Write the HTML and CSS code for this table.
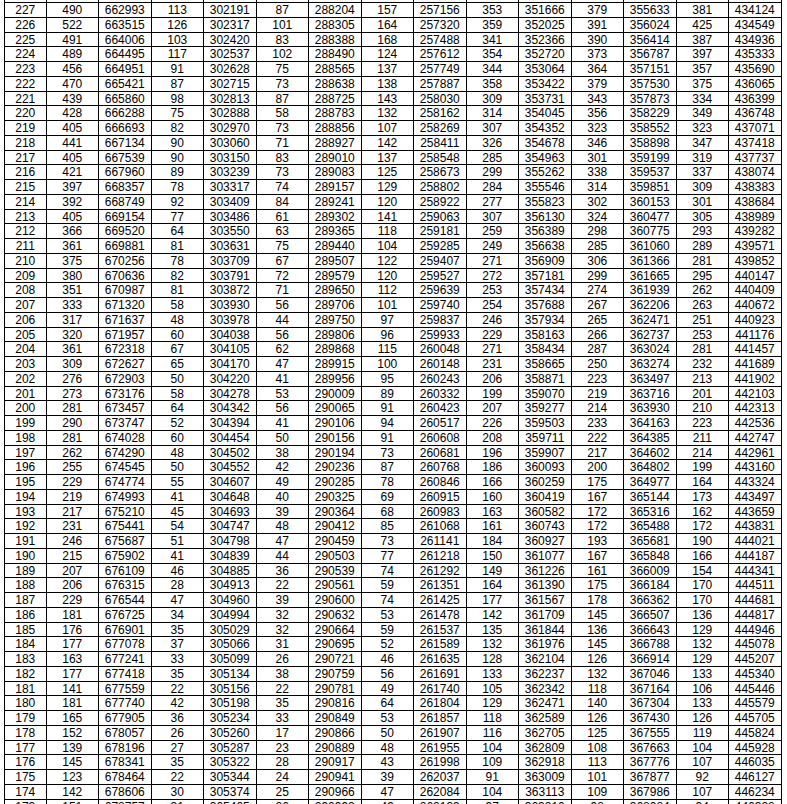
FILE: index.html
```html
<!DOCTYPE html>
<html>
<head>
<meta charset="utf-8">
<link rel="stylesheet" href="styles.css">
</head>
<body>
<div class="sheet">
<div class="row"><span></span><span></span><span></span><span></span><span></span><span></span><span></span><span></span><span></span><span></span><span></span><span></span><span></span><span></span><span></span></div>
<div class="row"><span>227</span><span>490</span><span>662993</span><span>113</span><span>302191</span><span>87</span><span>288204</span><span>157</span><span>257156</span><span>353</span><span>351666</span><span>379</span><span>355633</span><span>381</span><span>434124</span></div>
<div class="row"><span>226</span><span>522</span><span>663515</span><span>126</span><span>302317</span><span>101</span><span>288305</span><span>164</span><span>257320</span><span>359</span><span>352025</span><span>391</span><span>356024</span><span>425</span><span>434549</span></div>
<div class="row"><span>225</span><span>491</span><span>664006</span><span>103</span><span>302420</span><span>83</span><span>288388</span><span>168</span><span>257488</span><span>341</span><span>352366</span><span>390</span><span>356414</span><span>387</span><span>434936</span></div>
<div class="row"><span>224</span><span>489</span><span>664495</span><span>117</span><span>302537</span><span>102</span><span>288490</span><span>124</span><span>257612</span><span>354</span><span>352720</span><span>373</span><span>356787</span><span>397</span><span>435333</span></div>
<div class="row"><span>223</span><span>456</span><span>664951</span><span>91</span><span>302628</span><span>75</span><span>288565</span><span>137</span><span>257749</span><span>344</span><span>353064</span><span>364</span><span>357151</span><span>357</span><span>435690</span></div>
<div class="row"><span>222</span><span>470</span><span>665421</span><span>87</span><span>302715</span><span>73</span><span>288638</span><span>138</span><span>257887</span><span>358</span><span>353422</span><span>379</span><span>357530</span><span>375</span><span>436065</span></div>
<div class="row"><span>221</span><span>439</span><span>665860</span><span>98</span><span>302813</span><span>87</span><span>288725</span><span>143</span><span>258030</span><span>309</span><span>353731</span><span>343</span><span>357873</span><span>334</span><span>436399</span></div>
<div class="row"><span>220</span><span>428</span><span>666288</span><span>75</span><span>302888</span><span>58</span><span>288783</span><span>132</span><span>258162</span><span>314</span><span>354045</span><span>356</span><span>358229</span><span>349</span><span>436748</span></div>
<div class="row"><span>219</span><span>405</span><span>666693</span><span>82</span><span>302970</span><span>73</span><span>288856</span><span>107</span><span>258269</span><span>307</span><span>354352</span><span>323</span><span>358552</span><span>323</span><span>437071</span></div>
<div class="row"><span>218</span><span>441</span><span>667134</span><span>90</span><span>303060</span><span>71</span><span>288927</span><span>142</span><span>258411</span><span>326</span><span>354678</span><span>346</span><span>358898</span><span>347</span><span>437418</span></div>
<div class="row"><span>217</span><span>405</span><span>667539</span><span>90</span><span>303150</span><span>83</span><span>289010</span><span>137</span><span>258548</span><span>285</span><span>354963</span><span>301</span><span>359199</span><span>319</span><span>437737</span></div>
<div class="row"><span>216</span><span>421</span><span>667960</span><span>89</span><span>303239</span><span>73</span><span>289083</span><span>125</span><span>258673</span><span>299</span><span>355262</span><span>338</span><span>359537</span><span>337</span><span>438074</span></div>
<div class="row"><span>215</span><span>397</span><span>668357</span><span>78</span><span>303317</span><span>74</span><span>289157</span><span>129</span><span>258802</span><span>284</span><span>355546</span><span>314</span><span>359851</span><span>309</span><span>438383</span></div>
<div class="row"><span>214</span><span>392</span><span>668749</span><span>92</span><span>303409</span><span>84</span><span>289241</span><span>120</span><span>258922</span><span>277</span><span>355823</span><span>302</span><span>360153</span><span>301</span><span>438684</span></div>
<div class="row"><span>213</span><span>405</span><span>669154</span><span>77</span><span>303486</span><span>61</span><span>289302</span><span>141</span><span>259063</span><span>307</span><span>356130</span><span>324</span><span>360477</span><span>305</span><span>438989</span></div>
<div class="row"><span>212</span><span>366</span><span>669520</span><span>64</span><span>303550</span><span>63</span><span>289365</span><span>118</span><span>259181</span><span>259</span><span>356389</span><span>298</span><span>360775</span><span>293</span><span>439282</span></div>
<div class="row"><span>211</span><span>361</span><span>669881</span><span>81</span><span>303631</span><span>75</span><span>289440</span><span>104</span><span>259285</span><span>249</span><span>356638</span><span>285</span><span>361060</span><span>289</span><span>439571</span></div>
<div class="row"><span>210</span><span>375</span><span>670256</span><span>78</span><span>303709</span><span>67</span><span>289507</span><span>122</span><span>259407</span><span>271</span><span>356909</span><span>306</span><span>361366</span><span>281</span><span>439852</span></div>
<div class="row"><span>209</span><span>380</span><span>670636</span><span>82</span><span>303791</span><span>72</span><span>289579</span><span>120</span><span>259527</span><span>272</span><span>357181</span><span>299</span><span>361665</span><span>295</span><span>440147</span></div>
<div class="row"><span>208</span><span>351</span><span>670987</span><span>81</span><span>303872</span><span>71</span><span>289650</span><span>112</span><span>259639</span><span>253</span><span>357434</span><span>274</span><span>361939</span><span>262</span><span>440409</span></div>
<div class="row"><span>207</span><span>333</span><span>671320</span><span>58</span><span>303930</span><span>56</span><span>289706</span><span>101</span><span>259740</span><span>254</span><span>357688</span><span>267</span><span>362206</span><span>263</span><span>440672</span></div>
<div class="row"><span>206</span><span>317</span><span>671637</span><span>48</span><span>303978</span><span>44</span><span>289750</span><span>97</span><span>259837</span><span>246</span><span>357934</span><span>265</span><span>362471</span><span>251</span><span>440923</span></div>
<div class="row"><span>205</span><span>320</span><span>671957</span><span>60</span><span>304038</span><span>56</span><span>289806</span><span>96</span><span>259933</span><span>229</span><span>358163</span><span>266</span><span>362737</span><span>253</span><span>441176</span></div>
<div class="row"><span>204</span><span>361</span><span>672318</span><span>67</span><span>304105</span><span>62</span><span>289868</span><span>115</span><span>260048</span><span>271</span><span>358434</span><span>287</span><span>363024</span><span>281</span><span>441457</span></div>
<div class="row"><span>203</span><span>309</span><span>672627</span><span>65</span><span>304170</span><span>47</span><span>289915</span><span>100</span><span>260148</span><span>231</span><span>358665</span><span>250</span><span>363274</span><span>232</span><span>441689</span></div>
<div class="row"><span>202</span><span>276</span><span>672903</span><span>50</span><span>304220</span><span>41</span><span>289956</span><span>95</span><span>260243</span><span>206</span><span>358871</span><span>223</span><span>363497</span><span>213</span><span>441902</span></div>
<div class="row"><span>201</span><span>273</span><span>673176</span><span>58</span><span>304278</span><span>53</span><span>290009</span><span>89</span><span>260332</span><span>199</span><span>359070</span><span>219</span><span>363716</span><span>201</span><span>442103</span></div>
<div class="row"><span>200</span><span>281</span><span>673457</span><span>64</span><span>304342</span><span>56</span><span>290065</span><span>91</span><span>260423</span><span>207</span><span>359277</span><span>214</span><span>363930</span><span>210</span><span>442313</span></div>
<div class="row"><span>199</span><span>290</span><span>673747</span><span>52</span><span>304394</span><span>41</span><span>290106</span><span>94</span><span>260517</span><span>226</span><span>359503</span><span>233</span><span>364163</span><span>223</span><span>442536</span></div>
<div class="row"><span>198</span><span>281</span><span>674028</span><span>60</span><span>304454</span><span>50</span><span>290156</span><span>91</span><span>260608</span><span>208</span><span>359711</span><span>222</span><span>364385</span><span>211</span><span>442747</span></div>
<div class="row"><span>197</span><span>262</span><span>674290</span><span>48</span><span>304502</span><span>38</span><span>290194</span><span>73</span><span>260681</span><span>196</span><span>359907</span><span>217</span><span>364602</span><span>214</span><span>442961</span></div>
<div class="row"><span>196</span><span>255</span><span>674545</span><span>50</span><span>304552</span><span>42</span><span>290236</span><span>87</span><span>260768</span><span>186</span><span>360093</span><span>200</span><span>364802</span><span>199</span><span>443160</span></div>
<div class="row"><span>195</span><span>229</span><span>674774</span><span>55</span><span>304607</span><span>49</span><span>290285</span><span>78</span><span>260846</span><span>166</span><span>360259</span><span>175</span><span>364977</span><span>164</span><span>443324</span></div>
<div class="row"><span>194</span><span>219</span><span>674993</span><span>41</span><span>304648</span><span>40</span><span>290325</span><span>69</span><span>260915</span><span>160</span><span>360419</span><span>167</span><span>365144</span><span>173</span><span>443497</span></div>
<div class="row"><span>193</span><span>217</span><span>675210</span><span>45</span><span>304693</span><span>39</span><span>290364</span><span>68</span><span>260983</span><span>163</span><span>360582</span><span>172</span><span>365316</span><span>162</span><span>443659</span></div>
<div class="row"><span>192</span><span>231</span><span>675441</span><span>54</span><span>304747</span><span>48</span><span>290412</span><span>85</span><span>261068</span><span>161</span><span>360743</span><span>172</span><span>365488</span><span>172</span><span>443831</span></div>
<div class="row"><span>191</span><span>246</span><span>675687</span><span>51</span><span>304798</span><span>47</span><span>290459</span><span>73</span><span>261141</span><span>184</span><span>360927</span><span>193</span><span>365681</span><span>190</span><span>444021</span></div>
<div class="row"><span>190</span><span>215</span><span>675902</span><span>41</span><span>304839</span><span>44</span><span>290503</span><span>77</span><span>261218</span><span>150</span><span>361077</span><span>167</span><span>365848</span><span>166</span><span>444187</span></div>
<div class="row"><span>189</span><span>207</span><span>676109</span><span>46</span><span>304885</span><span>36</span><span>290539</span><span>74</span><span>261292</span><span>149</span><span>361226</span><span>161</span><span>366009</span><span>154</span><span>444341</span></div>
<div class="row"><span>188</span><span>206</span><span>676315</span><span>28</span><span>304913</span><span>22</span><span>290561</span><span>59</span><span>261351</span><span>164</span><span>361390</span><span>175</span><span>366184</span><span>170</span><span>444511</span></div>
<div class="row"><span>187</span><span>229</span><span>676544</span><span>47</span><span>304960</span><span>39</span><span>290600</span><span>74</span><span>261425</span><span>177</span><span>361567</span><span>178</span><span>366362</span><span>170</span><span>444681</span></div>
<div class="row"><span>186</span><span>181</span><span>676725</span><span>34</span><span>304994</span><span>32</span><span>290632</span><span>53</span><span>261478</span><span>142</span><span>361709</span><span>145</span><span>366507</span><span>136</span><span>444817</span></div>
<div class="row"><span>185</span><span>176</span><span>676901</span><span>35</span><span>305029</span><span>32</span><span>290664</span><span>59</span><span>261537</span><span>135</span><span>361844</span><span>136</span><span>366643</span><span>129</span><span>444946</span></div>
<div class="row"><span>184</span><span>177</span><span>677078</span><span>37</span><span>305066</span><span>31</span><span>290695</span><span>52</span><span>261589</span><span>132</span><span>361976</span><span>145</span><span>366788</span><span>132</span><span>445078</span></div>
<div class="row"><span>183</span><span>163</span><span>677241</span><span>33</span><span>305099</span><span>26</span><span>290721</span><span>46</span><span>261635</span><span>128</span><span>362104</span><span>126</span><span>366914</span><span>129</span><span>445207</span></div>
<div class="row"><span>182</span><span>177</span><span>677418</span><span>35</span><span>305134</span><span>38</span><span>290759</span><span>56</span><span>261691</span><span>133</span><span>362237</span><span>132</span><span>367046</span><span>133</span><span>445340</span></div>
<div class="row"><span>181</span><span>141</span><span>677559</span><span>22</span><span>305156</span><span>22</span><span>290781</span><span>49</span><span>261740</span><span>105</span><span>362342</span><span>118</span><span>367164</span><span>106</span><span>445446</span></div>
<div class="row"><span>180</span><span>181</span><span>677740</span><span>42</span><span>305198</span><span>35</span><span>290816</span><span>64</span><span>261804</span><span>129</span><span>362471</span><span>140</span><span>367304</span><span>133</span><span>445579</span></div>
<div class="row"><span>179</span><span>165</span><span>677905</span><span>36</span><span>305234</span><span>33</span><span>290849</span><span>53</span><span>261857</span><span>118</span><span>362589</span><span>126</span><span>367430</span><span>126</span><span>445705</span></div>
<div class="row"><span>178</span><span>152</span><span>678057</span><span>26</span><span>305260</span><span>17</span><span>290866</span><span>50</span><span>261907</span><span>116</span><span>362705</span><span>125</span><span>367555</span><span>119</span><span>445824</span></div>
<div class="row"><span>177</span><span>139</span><span>678196</span><span>27</span><span>305287</span><span>23</span><span>290889</span><span>48</span><span>261955</span><span>104</span><span>362809</span><span>108</span><span>367663</span><span>104</span><span>445928</span></div>
<div class="row"><span>176</span><span>145</span><span>678341</span><span>35</span><span>305322</span><span>28</span><span>290917</span><span>43</span><span>261998</span><span>109</span><span>362918</span><span>113</span><span>367776</span><span>107</span><span>446035</span></div>
<div class="row"><span>175</span><span>123</span><span>678464</span><span>22</span><span>305344</span><span>24</span><span>290941</span><span>39</span><span>262037</span><span>91</span><span>363009</span><span>101</span><span>367877</span><span>92</span><span>446127</span></div>
<div class="row"><span>174</span><span>142</span><span>678606</span><span>30</span><span>305374</span><span>25</span><span>290966</span><span>47</span><span>262084</span><span>104</span><span>363113</span><span>109</span><span>367986</span><span>107</span><span>446234</span></div>
<div class="row"><span>173</span><span>151</span><span>678757</span><span>31</span><span>305405</span><span>26</span><span>290992</span><span>49</span><span>262133</span><span>97</span><span>363210</span><span>98</span><span>368084</span><span>94</span><span>446328</span></div>
</div>
</body>
</html>
```

FILE: styles.css
```css
html, body {
  margin: 0;
  padding: 0;
  background: #ffffff;
  overflow: hidden;
}

.sheet {
  margin: -11.56px 0 0 4px;
  width: 777.5px;
  border-left: 1px solid #000000;
  font-family: "Liberation Sans Narrow", "Liberation Sans", Arial, sans-serif;
  font-size: 12px;
  color: #000000;
}

.row {
  display: grid;
  grid-template-columns: 41.5px repeat(14, 52.5px);
  height: 14.76px;
}

.row span {
  display: flex;
  align-items: center;
  justify-content: center;
  line-height: 1;
  border-right: 1px solid #000000;
  border-bottom: 1px solid #000000;
  white-space: nowrap;
  overflow: hidden;
}
```
